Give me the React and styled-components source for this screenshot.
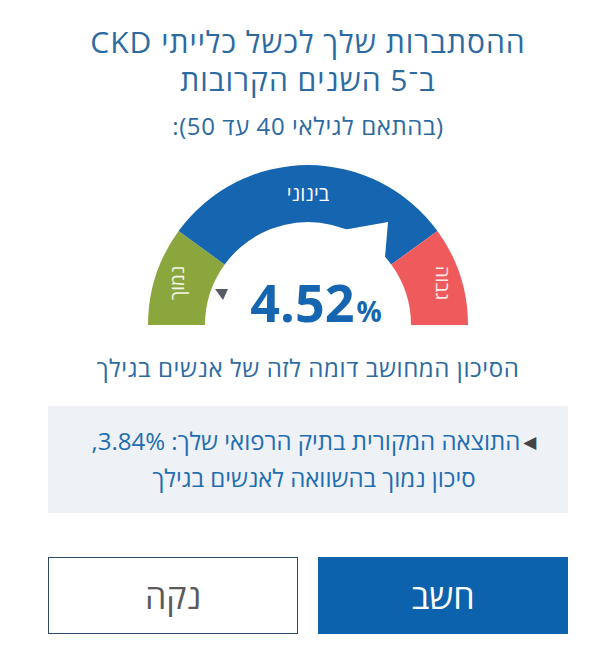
import React from 'react';
import styled, { createGlobalStyle } from 'styled-components';

const GlobalStyle = createGlobalStyle`
  body {
    margin: 0;
    background: #ffffff;
    font-family: "Open Sans", "DejaVu Sans", sans-serif;
  }
`;

const Gauge = () => {
  return (
    <Styled.GaugeWrap>
      <svg width="330" height="165" viewBox="0 0 330 165">
        <path d="M5 162 A160 160 0 0 1 35.6 68 L81.7 101.5 A103 103 0 0 0 62 162 Z" fill="#8ca63e" />
        <path d="M35.6 68 A160 160 0 0 1 294.4 68 L248.3 101.5 A103 103 0 0 0 81.7 101.5 Z" fill="#1565b0" />
        <path d="M294.4 68 A160 160 0 0 1 325 162 L268 162 A103 103 0 0 0 248.3 101.5 Z" fill="#ef5a5c" />
        <polygon points="200,67 245,59 242,94 230,100" fill="#ffffff" />
        <text x="165" y="38" textAnchor="middle" fill="#ffffff" fontSize="20" fontFamily="Open Sans, DejaVu Sans, sans-serif">בינוני</text>
        <text x="36" y="120" textAnchor="middle" dominantBaseline="middle" fill="#f3f6e6" fontSize="19" fontFamily="Open Sans, DejaVu Sans, sans-serif" transform="rotate(-90 36 120)">נמוך</text>
        <text x="298" y="120" textAnchor="middle" dominantBaseline="middle" fill="#fde9e9" fontSize="19" fontFamily="Open Sans, DejaVu Sans, sans-serif" transform="rotate(90 298 120)">גבוה</text>
        <polygon points="72,126 85,126 80,137" fill="#555a66" />
      </svg>
      <Styled.Value>
        4.52<Styled.Percent>%</Styled.Percent>
      </Styled.Value>
    </Styled.GaugeWrap>
  );
};

const App = () => {
  return (
    <Styled.Page dir="rtl">
      <GlobalStyle />
      <Styled.Title>
        ההסתברות שלך לכשל כלייתי CKD
        <br />
        ב־5 השנים הקרובות
      </Styled.Title>
      <Styled.Range>(בהתאם לגילאי 40 עד 50):</Styled.Range>

      <Gauge />

      <Styled.Caption>הסיכון המחושב דומה לזה של אנשים בגילך</Styled.Caption>

      <Styled.Note>
        <Styled.Arrow>◀</Styled.Arrow>
        התוצאה המקורית בתיק הרפואי שלך: 3.84%,
        <br />
        סיכון נמוך בהשוואה לאנשים בגילך
      </Styled.Note>

      <Styled.Buttons>
        <Button primary>חשב</Button>
        <Button>נקה</Button>
      </Styled.Buttons>
    </Styled.Page>
  );
};

const Styled = {
  Page: styled.div`
    width: 520px;
    margin-left: 48px;
    padding-top: 23px;
    display: flex;
    flex-direction: column;
    align-items: center;
  `,
  Title: styled.h1`
    margin: 0;
    font-size: 30px;
    font-weight: 400;
    line-height: 38px;
    letter-spacing: 1px;
    color: #2c6aa2;
    text-align: center;
  `,
  Range: styled.div`
    margin-top: 12px;
    font-size: 24px;
    line-height: 30px;
    letter-spacing: 0.6px;
    color: #2c6aa2;
  `,
  GaugeWrap: styled.div`
    position: relative;
    margin-top: 22px;
    width: 330px;
    height: 165px;
    svg {
      display: block;
    }
  `,
  Value: styled.div`
    position: absolute;
    left: 0;
    right: 0;
    bottom: 0;
    direction: ltr;
    text-align: center;
    padding-left: 16px;
    font-size: 52px;
    font-weight: 700;
    line-height: 1;
    color: #1565b0;
  `,
  Percent: styled.span`
    font-size: 28px;
    margin-left: 2px;
  `,
  Caption: styled.div`
    margin-top: 25px;
    font-size: 24px;
    line-height: 30px;
    letter-spacing: 0.6px;
    color: #2c6aa2;
  `,
  Note: styled.div`
    align-self: stretch;
    margin-top: 23px;
    background: #eef1f5;
    padding: 17px 4px 17px 16px;
    font-size: 24px;
    line-height: 36px;
    color: #1f6db2;
    text-align: center;
  `,
  Arrow: styled.span`
    font-size: 17px;
    color: #444;
    margin-left: 3px;
    vertical-align: 2px;
  `,
  Buttons: styled.div`
    align-self: stretch;
    margin-top: 44px;
    display: grid;
    grid-template-columns: 1fr 1fr;
    gap: 20px;
  `,
};

const Button = styled.button`
  height: 77px;
  border: ${(p) => (p.primary ? 'none' : '1.5px solid #2b4a68')};
  background: ${(p) => (p.primary ? '#0d62ad' : '#ffffff')};
  color: ${(p) => (p.primary ? '#ffffff' : '#5a5a5a')};
  font-family: "Open Sans", "DejaVu Sans", sans-serif;
  font-size: 34px;
  cursor: pointer;
`;

export default App;
